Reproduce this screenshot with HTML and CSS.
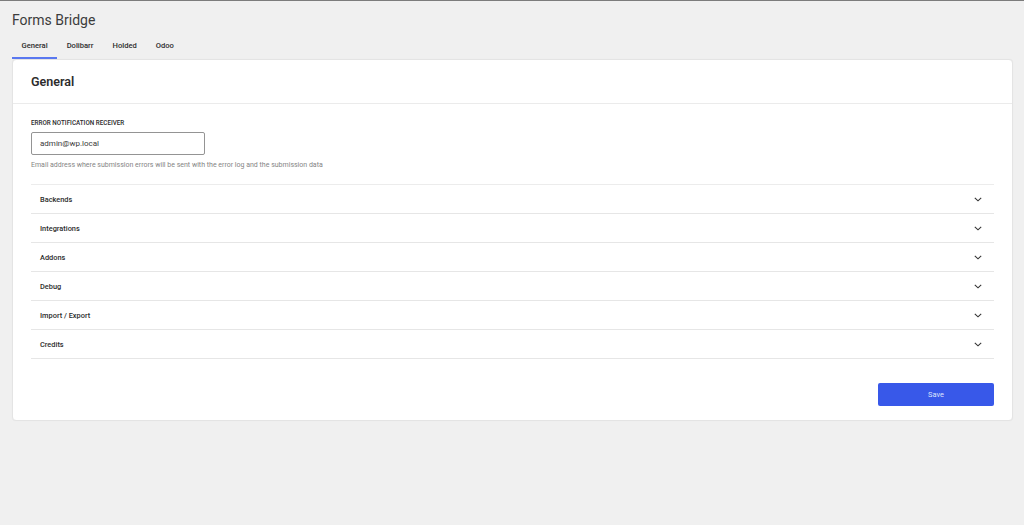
FILE: index.html
```html
<!DOCTYPE html>
<html lang="en">
<head>
<meta charset="utf-8">
<title>Forms Bridge</title>
<link rel="stylesheet" href="styles.css">
</head>
<body>
<div class="wrap">
  <h1 class="page-title">Forms Bridge</h1>
  <div class="tabs">
    <button class="tab active">General</button>
    <button class="tab">Dolibarr</button>
    <button class="tab">Holded</button>
    <button class="tab">Odoo</button>
  </div>
  <div class="card">
    <div class="card-header"><h2 class="card-title">General</h2></div>
    <div class="card-body">
      <div class="field">
        <label class="field-label">Error notification receiver</label>
        <div class="input">admin@wp.local</div>
        <p class="help">Email address where submission errors will be sent with the error log and the submission data</p>
      </div>
      <div class="panels">
        <div class="panel"><span class="panel-title">Backends</span><svg class="chev" viewBox="0 0 8 5" width="8" height="5"><path d="M0.8 0.8 L4 3.8 L7.2 0.8" fill="none" stroke="#333" stroke-width="1.1"/></svg></div>
        <div class="panel"><span class="panel-title">Integrations</span><svg class="chev" viewBox="0 0 8 5" width="8" height="5"><path d="M0.8 0.8 L4 3.8 L7.2 0.8" fill="none" stroke="#333" stroke-width="1.1"/></svg></div>
        <div class="panel"><span class="panel-title">Addons</span><svg class="chev" viewBox="0 0 8 5" width="8" height="5"><path d="M0.8 0.8 L4 3.8 L7.2 0.8" fill="none" stroke="#333" stroke-width="1.1"/></svg></div>
        <div class="panel"><span class="panel-title">Debug</span><svg class="chev" viewBox="0 0 8 5" width="8" height="5"><path d="M0.8 0.8 L4 3.8 L7.2 0.8" fill="none" stroke="#333" stroke-width="1.1"/></svg></div>
        <div class="panel"><span class="panel-title">Import / Export</span><svg class="chev" viewBox="0 0 8 5" width="8" height="5"><path d="M0.8 0.8 L4 3.8 L7.2 0.8" fill="none" stroke="#333" stroke-width="1.1"/></svg></div>
        <div class="panel"><span class="panel-title">Credits</span><svg class="chev" viewBox="0 0 8 5" width="8" height="5"><path d="M0.8 0.8 L4 3.8 L7.2 0.8" fill="none" stroke="#333" stroke-width="1.1"/></svg></div>
      </div>
      <div class="actions">
        <button class="save">Save</button>
      </div>
    </div>
  </div>
</div>
</body>
</html>
```
FILE: styles.css
```css
html, body {
  margin: 0;
  padding: 0;
}
body {
  background: #f0f0f0;
  font-family: Roboto, "Liberation Sans", sans-serif;
  color: #2c2c2c;
  border-top: 1px solid #7c7c7c;
  min-height: 524px;
}
.wrap {
  padding: 9px 11px 0 12px;
}
.page-title {
  margin: 0;
  font-size: 14px;
  line-height: 20px;
  font-weight: 400;
  color: #3c3c3c;
}
.tabs {
  display: flex;
  margin-top: 3px;
}
.tab {
  background: none;
  border: 0;
  border-bottom: 2px solid transparent;
  padding: 0 9.5px;
  height: 26px;
  font-family: inherit;
  font-size: 7.6px;
  font-weight: 500;
  color: #2c2c2c;
  cursor: pointer;
}
.tab.active {
  border-bottom-color: #5a78f0;
}
.card {
  background: #fff;
  border: 1px solid #e4e4e4;
  border-radius: 4px;
  box-shadow: 0 0 1px rgba(0,0,0,0.06);
}
.card-header {
  height: 43px;
  display: flex;
  align-items: center;
  padding: 0 18px;
  border-bottom: 1px solid #ebebeb;
}
.card-title {
  margin: 0;
  font-size: 12.5px;
  font-weight: 600;
  color: #2c2c2c;
}
.card-body {
  padding: 15px 18px 14px;
}
.field-label {
  display: block;
  font-size: 6.3px;
  line-height: 8px;
  font-weight: 500;
  text-transform: uppercase;
  color: #2c2c2c;
  margin-bottom: 5px;
}
.input {
  box-sizing: border-box;
  width: 174px;
  height: 23px;
  border: 1px solid #949494;
  border-radius: 2px;
  padding: 0 8px;
  display: flex;
  align-items: center;
  font-size: 8px;
  color: #3a3a3a;
}
.help {
  margin: 6px 0 0;
  font-size: 7px;
  line-height: 8px;
  color: #858585;
}
.panels {
  margin-top: 15px;
  border-bottom: 1px solid #e6e6e6;
}
.panel {
  height: 28px;
  border-top: 1px solid #e6e6e6;
  display: flex;
  align-items: center;
  justify-content: space-between;
  padding: 0 12px 0 9px;
}
.panel:first-child {
  border-top: 1px solid #ececec;
}
.panel-title {
  font-size: 7.4px;
  font-weight: 500;
  color: #2c2c2c;
}
.chev {
  display: block;
}
.actions {
  display: flex;
  justify-content: flex-end;
  margin-top: 24px;
}
.save {
  width: 116px;
  height: 23px;
  background: #3858e9;
  border: 0;
  border-radius: 2px;
  color: #dfe4fc;
  font-family: inherit;
  font-size: 7.4px;
  cursor: pointer;
}
```
